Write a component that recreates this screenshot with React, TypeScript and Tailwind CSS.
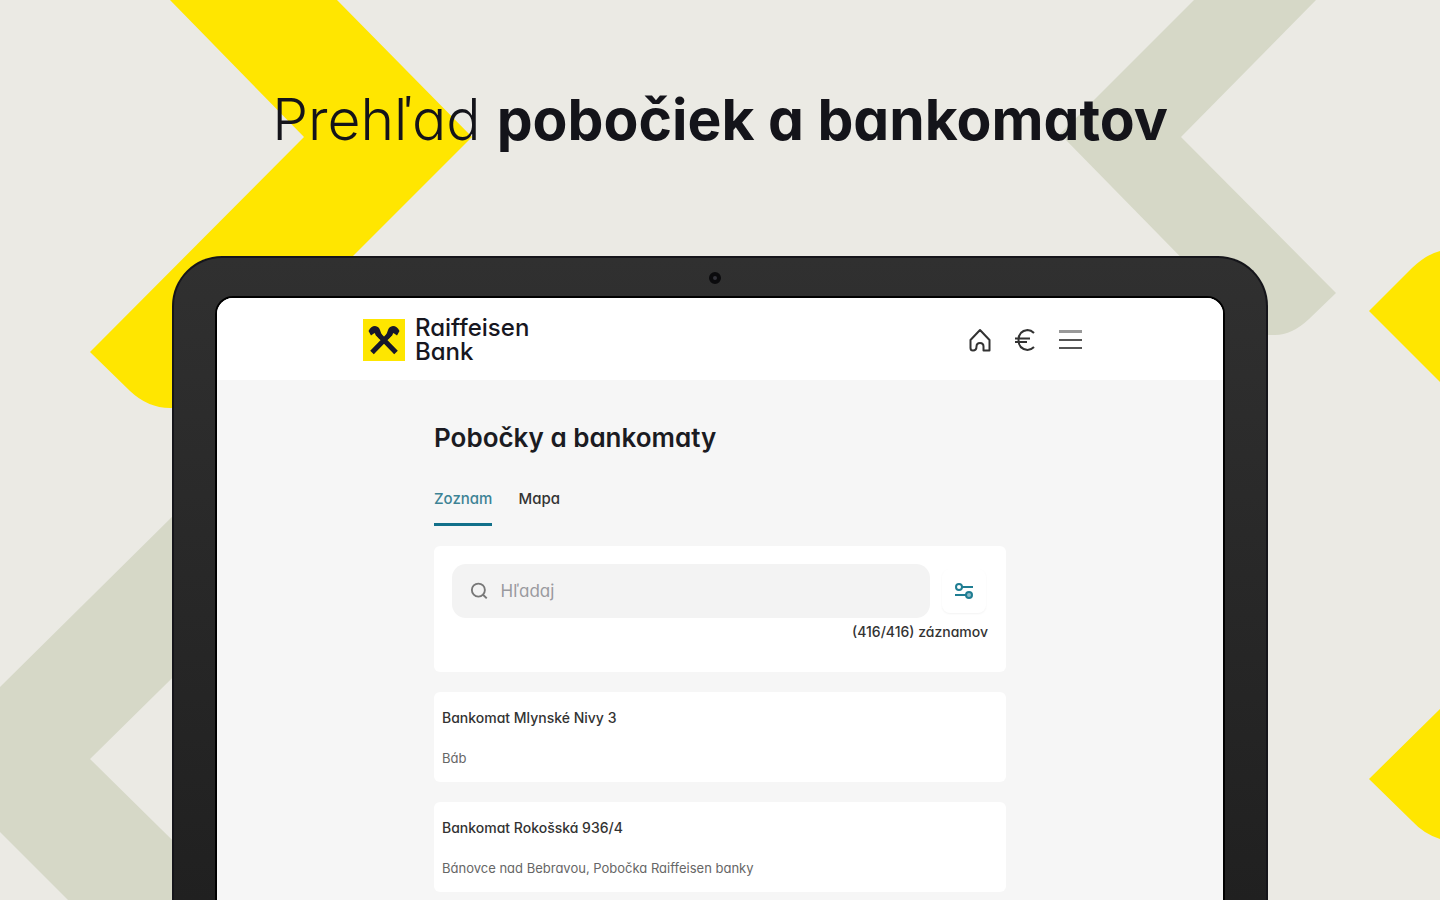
import React, { useState } from "react";

const branches = [
  { id: 1, name: "Bankomat Mlynské Nivy 3", address: "Báb" },
  {
    id: 2,
    name: "Bankomat Rokošská 936/4",
    address: "Bánovce nad Bebravou, Pobočka Raiffeisen banky",
  },
];

const tabs = ["Zoznam", "Mapa"];

function Backdrop() {
  return (
    <svg
      className="absolute inset-0 h-full w-full"
      viewBox="0 0 1440 900"
      preserveAspectRatio="xMidYMin slice"
      aria-hidden="true"
    >
      <g fill="#d6d8c7">
        <path d="M1194 0H1316L1181 137L1336 293L1309 319Q1292 335 1275 335H1257L1063 137L1060 134Z" />
        <path d="M180 509L0 687V832L68 900H230V897L90 759L230 621V460Z" />
      </g>
      <g fill="#ffe600">
        <path d="M170 0H337L472 137L210 399Q200 408 170 408Q148 408 130 391L90 352L304 137Z" />
        <path d="M1369 311L1412 268Q1427 254 1440 251V382Z" />
        <path d="M1369 779L1440 709V839Q1424 834 1412 821Z" />
      </g>
    </svg>
  );
}

function Logo() {
  return (
    <a href="#" className="flex items-center gap-[10px] text-[#17171f]">
      <svg className="h-[42px] w-[42px]" viewBox="0 0 42 42" aria-hidden="true">
        <path fill="#fee600" d="M0 0h42v42H0z" />
        <path stroke="#17172b" strokeWidth="5" d="M9 33.500L28 14M33 33.500L14 14" />
        <path
          fill="#17172b"
          d="M5.500 12Q8 7 12 7Q16 7.500 17 11L19.500 18L16.500 20L11.500 14L8 16.500ZM36.500 12Q34 7 30 7Q26 7.500 25 11L22.500 18L25.500 20L30.500 14L34 16.500Z"
        />
      </svg>
      <span className="text-2xl leading-6 font-medium">
        Raiffeisen
        <br />
        Bank
      </span>
    </a>
  );
}

function Header() {
  return (
    <header className="bg-white">
      <div className="mx-auto flex h-[82px] max-w-[726px] items-center justify-between pt-[2px] pl-[6px]">
        <Logo />
        <nav className="flex items-center gap-[19px] text-[#333]">
          <button aria-label="Domov">
            <svg className="h-[26px] w-[26px]" viewBox="0 0 26 26" fill="none" stroke="currentColor" strokeWidth="2" strokeLinejoin="round">
              <path d="M13 3L3.500 13V21Q3.500 23.500 6 23.500Q9.500 23.500 9.500 19.500Q9.500 16 13 16T16.500 19.500V23.500H22.500V13Z" />
            </svg>
          </button>
          <button aria-label="Kurzy">
            <svg className="h-[26px] w-[26px]" viewBox="0 0 26 26" fill="none" stroke="currentColor" strokeWidth="2">
              <path d="M22 6Q19 3 15.500 3Q6.500 4 6.500 13T15.500 23Q19 23 22 20M3 11.500H18M3 15H15" />
            </svg>
          </button>
          <button aria-label="Menu">
            <svg className="h-[26px] w-[26px]" viewBox="0 0 26 26" fill="none" strokeWidth="2">
              <path stroke="#999" strokeWidth="3" d="M2 4.500H25" />
              <path stroke="#555" d="M2 13H25M2 21H25" />
            </svg>
          </button>
        </nav>
      </div>
    </header>
  );
}

function SearchCard() {
  const [query, setQuery] = useState("");

  return (
    <div className="h-[126px] rounded-md bg-white px-[18px] pt-[18px]">
      <div className="flex items-center gap-3">
        <label className="flex h-[54px] flex-1 items-center gap-3 rounded-[14px] bg-[#f3f3f3] px-[18px]">
          <svg className="h-5 w-5 text-[#777]" viewBox="0 0 20 20" fill="none" stroke="currentColor" strokeWidth="2" aria-hidden="true">
            <circle cx="9" cy="9" r="7" />
            <path d="M14 14L18 18" />
          </svg>
          <input
            className="w-full bg-transparent text-[17px] leading-6 outline-none placeholder:text-[#9a9a9f]"
            aria-label="Hľadaj"
            placeholder="Hľadaj"
            value={query}
            onChange={(e) => setQuery(e.target.value)}
          />
        </label>
        <button
          aria-label="Filter"
          className="mr-[2px] flex h-11 w-11 items-center justify-center rounded-lg bg-white text-[#1f7d92] shadow-xs"
        >
          <svg className="h-5 w-5" viewBox="0 0 20 20" fill="none" stroke="currentColor" strokeWidth="2">
            <circle cx="5" cy="6" r="3" />
            <path d="M8 6H19M1 14H12" />
            <circle cx="15" cy="14" r="3" fill="#8fbcc8" />
          </svg>
        </button>
      </div>
      <p className="mt-1 text-right text-sm leading-5 font-medium text-[#333]">(416/416) záznamov</p>
    </div>
  );
}

function BranchCard({ name, address }: { name: string; address: string }) {
  return (
    <li className="flex h-[90px] flex-col gap-5 rounded-md bg-white px-2 pt-4">
      <h3 className="text-sm leading-5 font-medium text-[#333]">{name}</h3>
      <p className="text-[13px] leading-5 text-[#666]">{address}</p>
    </li>
  );
}

export default function App() {
  const [active, setActive] = useState("Zoznam");

  return (
    <div className="relative flex h-screen flex-col overflow-hidden bg-[#ebeae4] font-['Inter',sans-serif] [font-feature-settings:'cv11']">
      <Backdrop />
      <h1 className="relative pt-[84px] text-center text-[57px] leading-[72px] font-light text-[#14141a]">
        Prehľad <strong className="font-bold">pobočiek a bankomatov</strong>
      </h1>
      <div className="relative mx-auto mt-[100px] flex w-full max-w-[1096px] flex-1 flex-col rounded-t-[50px] border-2 border-b-0 border-[#15151a] bg-linear-to-b from-[#303030] to-[#202020] px-[41px] pt-[38px]">
        <span className="absolute top-[14px] left-1/2 -ml-[11px] h-3 w-3 rounded-full border-4 border-[#0b0b0d] bg-[#33333a]" />
        <div className="flex-1 overflow-hidden rounded-t-[18px] border-2 border-b-0 border-black bg-[#f6f6f6]">
          <Header />
          <main className="mx-auto max-w-[572px] pt-10">
            <h2 className="text-[26px] leading-9 font-semibold text-[#1b1b22]">Pobočky a bankomaty</h2>
            <div role="tablist" className="mt-7 flex gap-[26px]">
              {tabs.map((tab) => (
                <button
                  key={tab}
                  role="tab"
                  aria-selected={tab === active}
                  onClick={() => setActive(tab)}
                  className={`h-[42px] border-b-[3px] pb-2 text-[15px] font-medium ${
                    tab === active ? "border-[#12708a] text-[#3d8395]" : "border-transparent text-[#333]"
                  }`}
                >
                  {tab}
                </button>
              ))}
            </div>
            <div className="mt-5 flex flex-col gap-5">
              <SearchCard />
              <ul className="flex flex-col gap-5">
                {branches.map((b) => (
                  <BranchCard key={b.id} name={b.name} address={b.address} />
                ))}
              </ul>
            </div>
          </main>
        </div>
      </div>
    </div>
  );
}
